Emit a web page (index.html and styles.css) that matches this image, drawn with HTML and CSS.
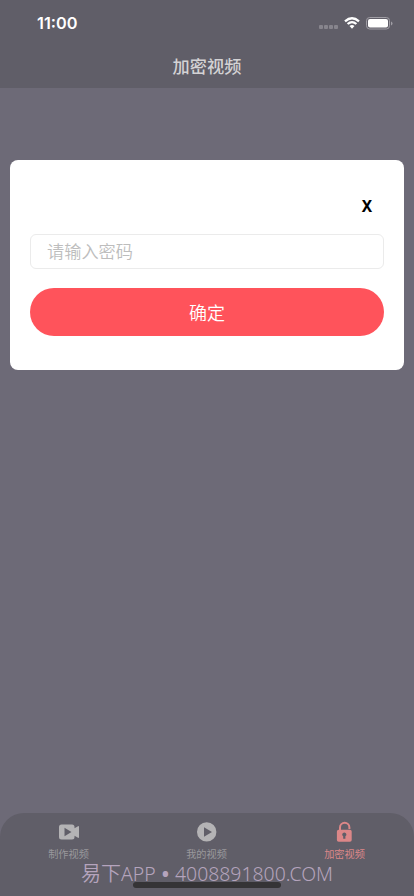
FILE: index.html
```html
<!DOCTYPE html>
<html lang="zh-CN">
<head>
<meta charset="utf-8">
<meta name="viewport" content="width=device-width, initial-scale=1">
<title>加密视频</title>
<link rel="stylesheet" href="styles.css">
</head>
<body>
<div class="screen">
  <header class="header">
    <div class="status">
      <span class="time">11:00</span>
      <div class="status-icons">
        <span class="dots"><i></i><i></i><i></i><i></i></span>
        <svg class="wifi" width="16" height="12" viewBox="0 0 16 12">
          <path d="M1 4.300Q8-1.900 15 4.300M3.600 7Q8 3.200 12.400 7" fill="none" stroke="#fff" stroke-width="2.300"/>
          <path d="M5.500 9Q8 7 10.500 9L8 11.700Z" fill="#fff"/>
        </svg>
        <svg class="battery" width="27" height="13" viewBox="0 0 27 13">
          <rect x=".5" y=".5" width="23" height="11.500" rx="3.200" fill="none" stroke="#a09ea5"/>
          <rect x="2" y="2" width="20" height="8.500" rx="2" fill="#fff"/>
          <path d="M25 4.500q1.500.6 1.500 2t-1.500 2Z" fill="#a09ea5"/>
        </svg>
      </div>
    </div>
    <h1 class="title">加密视频</h1>
  </header>

  <main class="content">
    <section class="dialog">
      <button class="close" type="button">X</button>
      <input class="password" type="text" placeholder="请输入密码">
      <button class="confirm" type="button">确定</button>
    </section>
  </main>

  <nav class="tabbar">
    <a class="tab">
      <svg width="22" height="22" viewBox="0 0 22 22">
        <path fill="currentColor" fill-rule="evenodd" d="M3.500 3.500h10.500A2.500 2.500 0 0 1 16.500 6v1.300L20 5.200q1-.4 1 .8v10q0 1.200-1 .8l-3.500-2.100V16A2.500 2.500 0 0 1 14 18.500H3.500A2.500 2.500 0 0 1 1 16V6A2.500 2.500 0 0 1 3.500 3.500ZM6.500 6.800v8.400l7-4.200Z"/>
      </svg>
      <span>制作视频</span>
    </a>
    <a class="tab">
      <svg width="22" height="22" viewBox="0 0 22 22">
        <path fill="currentColor" fill-rule="evenodd" d="M10.700 1.200a9.700 9.700 0 1 1 0 19.400a9.700 9.700 0 1 1 0-19.400ZM8 6.300v9.400l8-4.700Z"/>
      </svg>
      <span>我的视频</span>
    </a>
    <a class="tab active">
      <svg width="22" height="22" viewBox="0 0 22 22">
        <path fill="none" stroke="currentColor" stroke-width="2" d="M6 9.500V6.500a4.700 4.700 0 0 1 9.400 0V8"/>
        <path fill="currentColor" fill-rule="evenodd" d="M4.700 8.800h11.200a1.800 1.800 0 0 1 1.800 1.800v8.400a1.800 1.800 0 0 1-1.800 1.800H4.700a1.800 1.800 0 0 1-1.800-1.800v-8.400a1.800 1.800 0 0 1 1.800-1.800ZM10.300 11.400a2.100 2.100 0 0 0-1.100 3.900V17.800h2.200V15.300A2.100 2.100 0 0 0 10.300 11.400Z"/>
      </svg>
      <span>加密视频</span>
    </a>
  </nav>
  <div class="watermark"><span class="cn">易下</span>APP <b>•</b> 4008891800.COM</div>
  <div class="home-bar"></div>
</div>
</body>
</html>
```
FILE: styles.css
```css
* { box-sizing: border-box; }
body {
  margin: 0;
  font-family: "Noto Sans CJK SC", sans-serif;
}
.screen {
  position: relative;
  display: flex;
  flex-direction: column;
  width: 414px;
  height: 896px;
  overflow: hidden;
  background: #6d6a77;
}
.header {
  height: 88px;
  background: #605e68;
}
.status {
  display: flex;
  justify-content: space-between;
  align-items: center;
  height: 44px;
  padding: 2px 21px 0 37px;
}
.time {
  font: 600 16.3px/20px Inter, sans-serif;
  color: #fff;
}
.status-icons { display: flex; align-items: center; }
.dots { display: flex; gap: 1px; margin: 8px 6px 0 0; }
.dots i { width: 4px; height: 4px; border-radius: 1px; background: #87858d; }
.wifi { margin-right: 6px; }
.title {
  margin: 0;
  font-size: 17.2px;
  font-weight: 500;
  line-height: 43px;
  text-align: center;
  color: #d3d2d4;
}
.content { flex: 1; padding: 72px 10px 0; }
.dialog {
  display: flex;
  flex-direction: column;
  width: 394px;
  height: 210px;
  padding: 34px 20px;
  border-radius: 8px;
  background: #fff;
}
.close {
  align-self: flex-end;
  width: 34px;
  height: 24px;
  padding: 0;
  border: 0;
  background: none;
  font: 700 15.5px/24px "Noto Sans", sans-serif;
  color: #000;
}
.password {
  width: 100%;
  height: 35px;
  margin-top: 16px;
  padding: 0 16px 2px;
  border: 1px solid #ebebeb;
  border-radius: 6px;
  font: 350 17.2px "Noto Sans CJK SC", sans-serif;
}
.password::placeholder { color: #bdbdbd; opacity: 1; }
.confirm {
  height: 48px;
  margin-top: 19px;
  padding: 0;
  border: 0;
  border-radius: 24px;
  background: #ff535b;
  font: 350 18px/48px "Noto Sans CJK SC", sans-serif;
  color: #fff;
}
.tabbar {
  display: flex;
  height: 83px;
  padding-top: 8px;
  border-radius: 24px 24px 0 0;
  background: #605e68;
}
.tab {
  display: flex;
  flex: 1;
  flex-direction: column;
  align-items: center;
  color: #b4b3b5;
}
.tab span {
  margin: 3px 1px 0 0;
  font-size: 10.2px;
  font-weight: 400;
  line-height: 15px;
  color: #99989c;
}
.tab.active, .tab.active span { color: #dc8788; }
.watermark {
  position: absolute;
  left: 0;
  right: 0;
  top: 858px;
  font: 350 19.4px/30px "Noto Sans", "Noto Sans CJK SC", sans-serif;
  text-align: center;
  white-space: nowrap;
  color: #b5a4bd;
}
.watermark .cn { font: 350 20px/30px "Noto Sans CJK SC", sans-serif; }
.watermark b { font-weight: 700; margin: 0 1px; }
.home-bar {
  position: absolute;
  left: 133px;
  top: 882px;
  width: 148px;
  height: 6px;
  border-radius: 3px;
  background: #353436;
}
```
